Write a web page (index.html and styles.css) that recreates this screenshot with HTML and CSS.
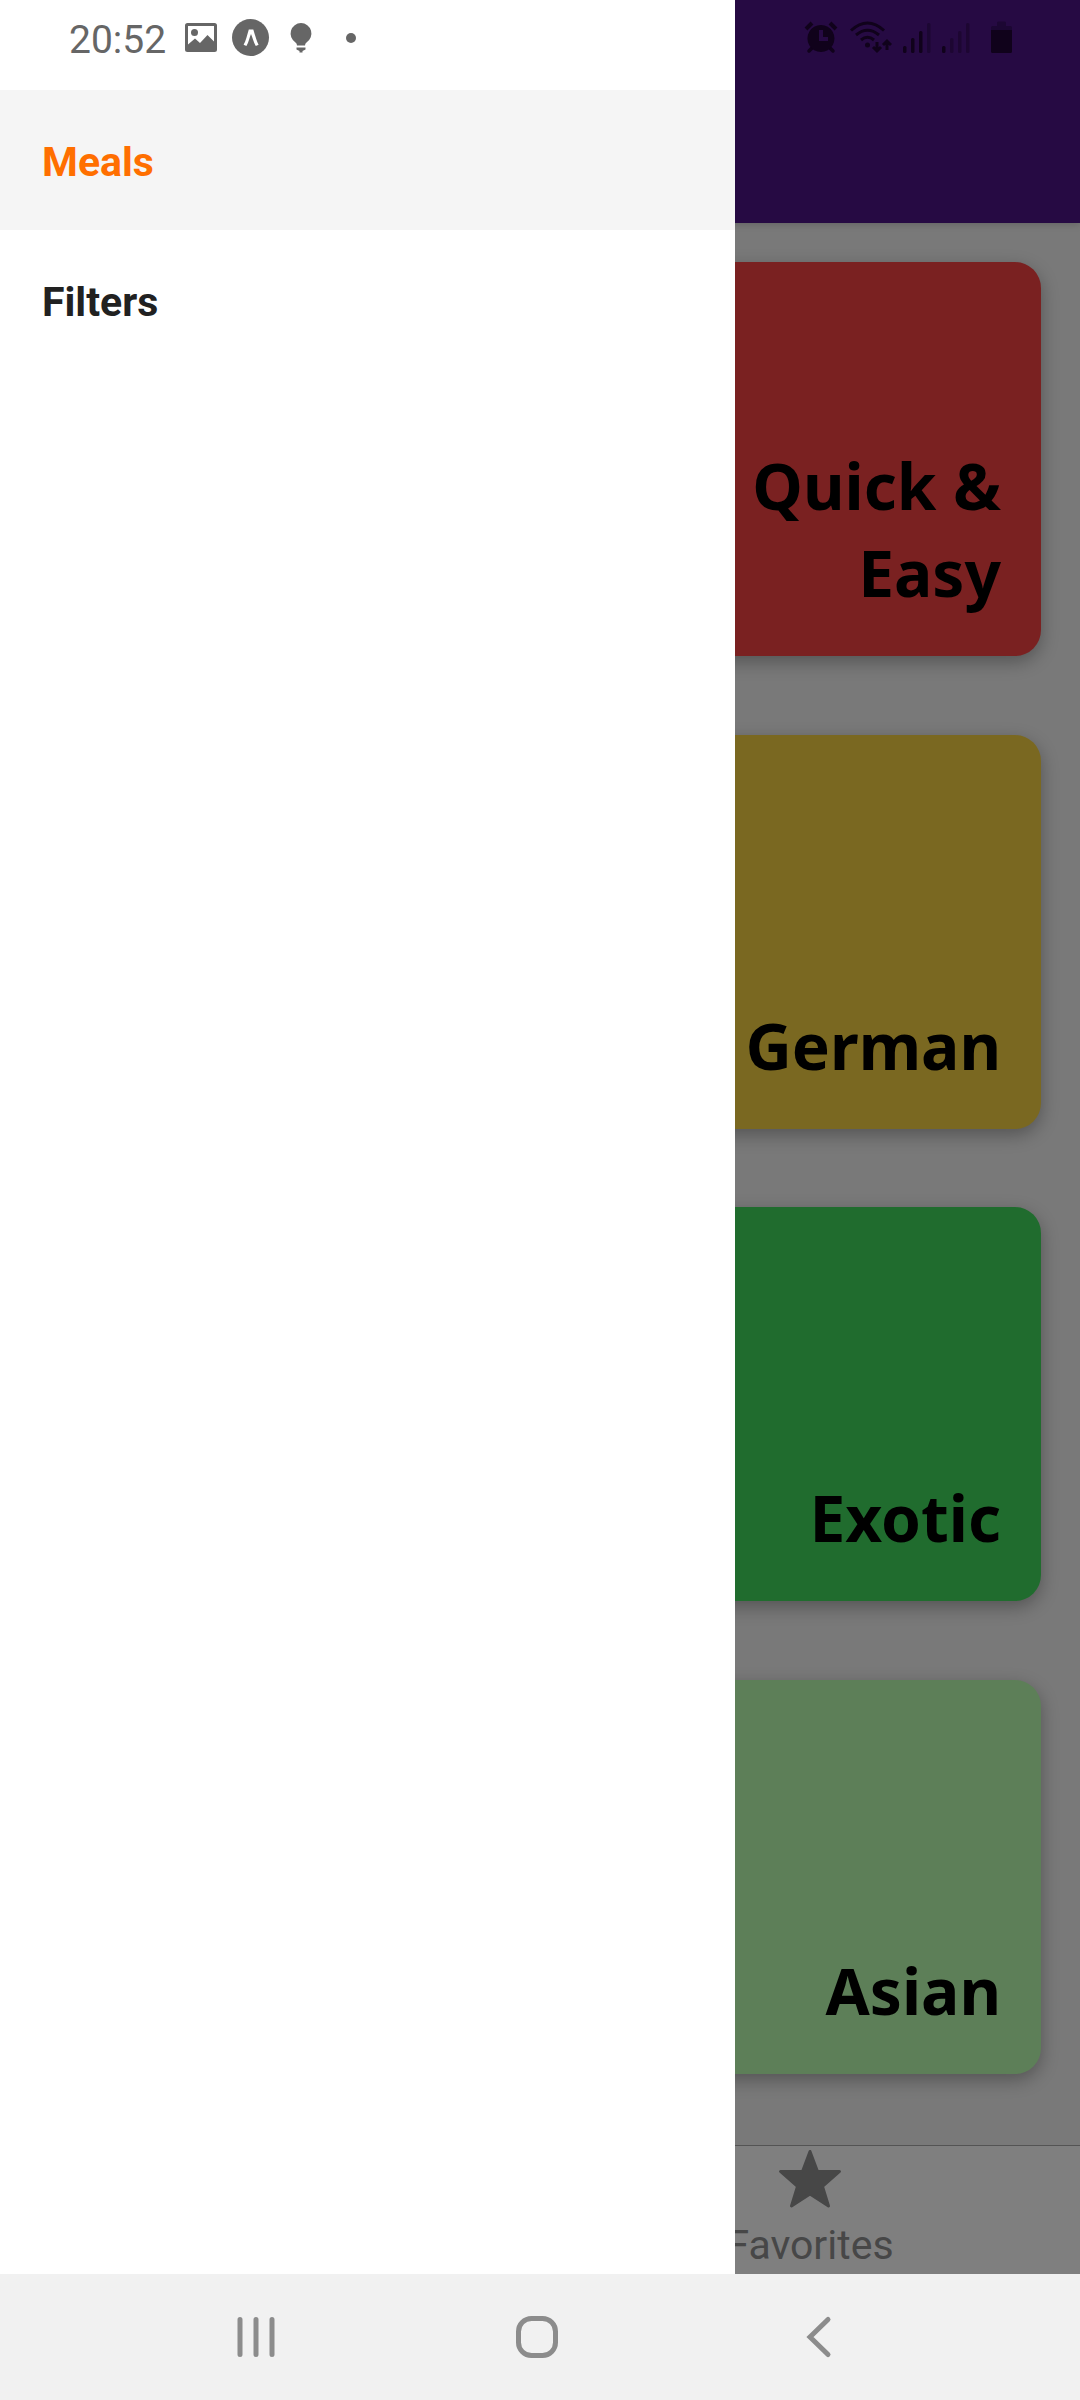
FILE: index.html
```html
<!DOCTYPE html>
<html lang="en">
<head>
<meta charset="utf-8">
<meta name="viewport" content="width=device-width, initial-scale=1">
<title>Meals</title>
<link rel="stylesheet" href="styles.css">
</head>
<body class="device">
  <div class="app">
    <header class="app-header"></header>
    <main class="categories">
      <button class="category category--red" type="button">Quick &amp; Easy</button>
      <button class="category category--yellow" type="button">German</button>
      <button class="category category--green" type="button">Exotic</button>
      <button class="category category--mint" type="button">Asian</button>
    </main>
    <nav class="tabs">
      <a class="tab" href="#favorites">
        <svg class="tab-icon" viewBox="0 0 64 60" aria-hidden="true"><path d="M32 2.500 L39.500 22.500 H61.500 L44.500 37.500 L50.500 57 L32 45 L13.500 57 L19.500 37.500 L2.500 22.500 H24.500 Z" fill="currentColor" stroke="currentColor" stroke-width="3" stroke-linejoin="round"/></svg>
        <span>Favorites</span>
      </a>
    </nav>
    <div class="scrim"></div>
    <nav class="drawer">
      <a class="drawer-item drawer-item--active" href="#meals">Meals</a>
      <a class="drawer-item" href="#filters">Filters</a>
    </nav>
    <div class="status">
      <div class="status-left">
        <time class="clock">20:52</time>
        <svg class="notice" viewBox="0 0 38 38" aria-hidden="true"><path fill="currentColor" fill-rule="evenodd" d="M5.500 4 H32.500 Q35 4 35 6.500 V30.500 Q35 33 32.500 33 H5.500 Q3 33 3 30.500 V6.500 Q3 4 5.500 4 Z M6 7 V25.500 L13 19.500 L18 24 L25.500 16 L32 22.500 V7 Z"/><circle cx="12.500" cy="13.500" r="3.500" fill="currentColor"/></svg>
        <svg class="notice" viewBox="0 0 38 38" aria-hidden="true"><circle cx="18.500" cy="18.500" r="18.500" fill="currentColor"/><path d="M11.600 25.800 C14 22 15 16 16.800 10.500 H21.300 C23 16 24.500 22 26.600 25.800 L23.800 27 C21.500 23 20.500 18.500 19 15 C17.500 18.500 16.800 23 14.400 27 Z" fill="#fff"/></svg>
        <svg class="notice" viewBox="0 0 38 38" aria-hidden="true"><path fill="currentColor" d="M19 4 A10.500 10.500 0 0 1 24.500 23.400 Q23 24.500 23 26.500 H15 Q15 24.500 13.500 23.400 A10.500 10.500 0 0 1 19 4 Z M14.500 28.500 H23.500 V30.500 L20.500 32 V33.500 H17.500 V32 L14.500 30.500 Z"/></svg>
        <svg class="notice" viewBox="0 0 38 38" aria-hidden="true"><circle cx="19" cy="19" r="5" fill="currentColor"/></svg>
      </div>
      <div class="status-right">
        <svg class="alarm" viewBox="0 0 35 38" aria-hidden="true"><g stroke="currentColor" fill="none"><path stroke-width="4" d="M2 10 L8 4 M26 4 L32 10"/><path stroke-width="3.500" stroke-linecap="round" d="M8 29 L5 32 M26 29 L29 32"/></g><path fill="currentColor" fill-rule="evenodd" d="M17 6 A13.500 13.500 0 1 1 16.900 6 Z M15 11 V22 H24 V18 H19 V11 Z"/></svg>
        <svg class="wifi" viewBox="0 0 42 38" aria-hidden="true"><g stroke="currentColor" fill="none" stroke-width="3"><path d="M1 11.500 Q17.500 -3.500 34 11.500 M6 16 Q17.500 6.500 29 16 M11 21 Q17.500 15.500 24 21"/><path d="M27 23 V32 M23 28 L27 32 L31 28 M37 31 V22 M33 26 L37 22 L41 26"/></g><circle cx="17.500" cy="26" r="2.500" fill="currentColor"/></svg>
        <svg class="signal" viewBox="0 0 28 38" aria-hidden="true"><g fill="currentColor"><rect y="27" width="3.500" height="7" rx="1.500"/><rect x="8" y="19" width="3.500" height="15" rx="1.500"/><rect x="16" y="12" width="3.500" height="22" rx="1.500"/><rect class="faint" x="24" y="4" width="3.500" height="30" rx="1.500"/></g></svg>
        <svg class="signal" viewBox="0 0 28 38" aria-hidden="true"><g fill="currentColor"><rect y="27" width="3.500" height="7" rx="1.500"/><g class="faint"><rect x="8" y="19" width="3.500" height="15" rx="1.500"/><rect x="16" y="12" width="3.500" height="22" rx="1.500"/><rect x="24" y="4" width="3.500" height="30" rx="1.500"/></g></g></svg>
        <svg class="battery" viewBox="0 0 22 38" aria-hidden="true"><path class="faint" fill="currentColor" d="M6 4 Q6 2.500 7.500 2.500 H13.500 Q15 2.500 15 4 V7 H19.500 Q21 7 21 8.500 V11 H0 V8.500 Q0 7 1.500 7 H6 Z"/><path fill="currentColor" d="M0 11 H21 V32.500 Q21 34 19.500 34 H1.500 Q0 34 0 32.500 Z"/></svg>
      </div>
    </div>
  </div>
  <nav class="system-nav">
    <button class="system-button" type="button" aria-label="Recent apps"><svg class="system-icon" viewBox="0 0 48 48"><path d="M8 6.500 V41.500 M24 6.500 V41.500 M40 6.500 V41.500"/></svg></button>
    <button class="system-button" type="button" aria-label="Home"><svg class="system-icon" viewBox="0 0 48 48"><rect x="5.500" y="5.500" width="37" height="37" rx="13"/></svg></button>
    <button class="system-button" type="button" aria-label="Back"><svg class="system-icon" viewBox="0 0 48 48"><path d="M34 6.500 L16 24 L34 41.500"/></svg></button>
  </nav>
</body>
</html>
```
FILE: styles.css
```css
* {
  box-sizing: border-box;
}

.device {
  display: flex;
  flex-direction: column;
  min-height: 100vh;
  margin: 0;
  font-family: Roboto, "Liberation Sans", sans-serif;
  font-size: 41px;
  line-height: 48px;
  background: #f2f2f2;
}

a {
  color: inherit;
  text-decoration: none;
}

button {
  padding: 0;
  border: 0;
  background: none;
  font: inherit;
}

svg {
  display: block;
  flex: none;
}

.app {
  position: relative;
  display: flex;
  flex: 1;
  flex-direction: column;
  overflow: hidden;
}

.app-header {
  position: relative;
  height: 223px;
  background: #4c1486;
  box-shadow: 0 1px 8px rgba(0, 0, 0, 0.2);
}

/* Two-column category grid; the drawer covers the first column. */
.categories {
  display: grid;
  flex: 1;
  grid-template-columns: 1fr 1fr;
  align-content: space-between;
  column-gap: 78px;
  row-gap: 39px;
  padding: 39px 39px 71px;
}

.category {
  display: flex;
  grid-column: 2;
  align-items: flex-end;
  justify-content: flex-end;
  height: 394px;
  padding: 40px;
  border-radius: 26px;
  color: #000;
  font-family: "Noto Sans", "Open Sans", sans-serif;
  font-size: 64px;
  font-weight: 700;
  line-height: 87px;
  text-align: right;
  box-shadow: 0 6px 18px rgba(0, 0, 0, 0.3);
}

.category--red {
  padding-left: 120px;
  background: #f54242;
}

.category--yellow {
  background: #f5d142;
}

.category--green {
  background: #41d95d;
}

.category--mint {
  background: #bbffb0;
}

.tabs {
  display: grid;
  grid-template-columns: 1fr 1fr;
  height: 129px;
  border-top: 1px solid #a8a8a8;
  background: #fff;
}

.tab {
  display: flex;
  grid-column: 2;
  flex-direction: column;
  align-items: center;
  justify-content: space-between;
  padding: 3px 0 5px;
  color: #8e8e8f;
}

.tab-icon {
  width: 64px;
  height: 60px;
}

.scrim {
  position: absolute;
  inset: 0;
  background: rgba(0, 0, 0, 0.5);
}

.drawer {
  position: absolute;
  top: 0;
  bottom: 0;
  left: 0;
  width: 735px;
  max-width: 100%;
  padding-top: 90px;
  background: #fff;
}

.drawer-item {
  display: flex;
  align-items: center;
  height: 140px;
  padding: 4px 42px 0;
  color: #212121;
  font-weight: 700;
}

.drawer-item--active {
  background: #f5f5f5;
  color: #ff6f00;
}

.status {
  position: absolute;
  top: 0;
  right: 0;
  left: 0;
  display: flex;
  align-items: center;
  justify-content: space-between;
  height: 76px;
  padding: 0 67px 0 69px;
}

.status-left {
  display: flex;
  align-items: center;
  gap: 12px;
  color: #666;
}

.clock {
  width: 101px;
  padding-top: 3px;
  font-size: 39px;
}

.notice {
  width: 38px;
  height: 38px;
}

.status-right {
  display: flex;
  gap: 11px;
  color: #10021b;
}

.faint {
  opacity: 0.4;
}

.alarm {
  width: 35px;
  height: 38px;
}

.wifi {
  width: 42px;
  height: 38px;
}

.signal {
  width: 28px;
  height: 38px;
}

.battery {
  width: 22px;
  height: 38px;
  margin-left: 10px;
}

.system-nav {
  display: grid;
  grid-template-columns: repeat(3, 1fr);
  height: 126px;
  padding: 0 122px 0 115px;
  background: #f1f1f1;
}

.system-button {
  display: grid;
  place-items: center;
  color: #8c8c8c;
}

.system-icon {
  width: 48px;
  height: 48px;
  fill: none;
  stroke: currentColor;
  stroke-width: 5px;
  stroke-linecap: round;
}
```
